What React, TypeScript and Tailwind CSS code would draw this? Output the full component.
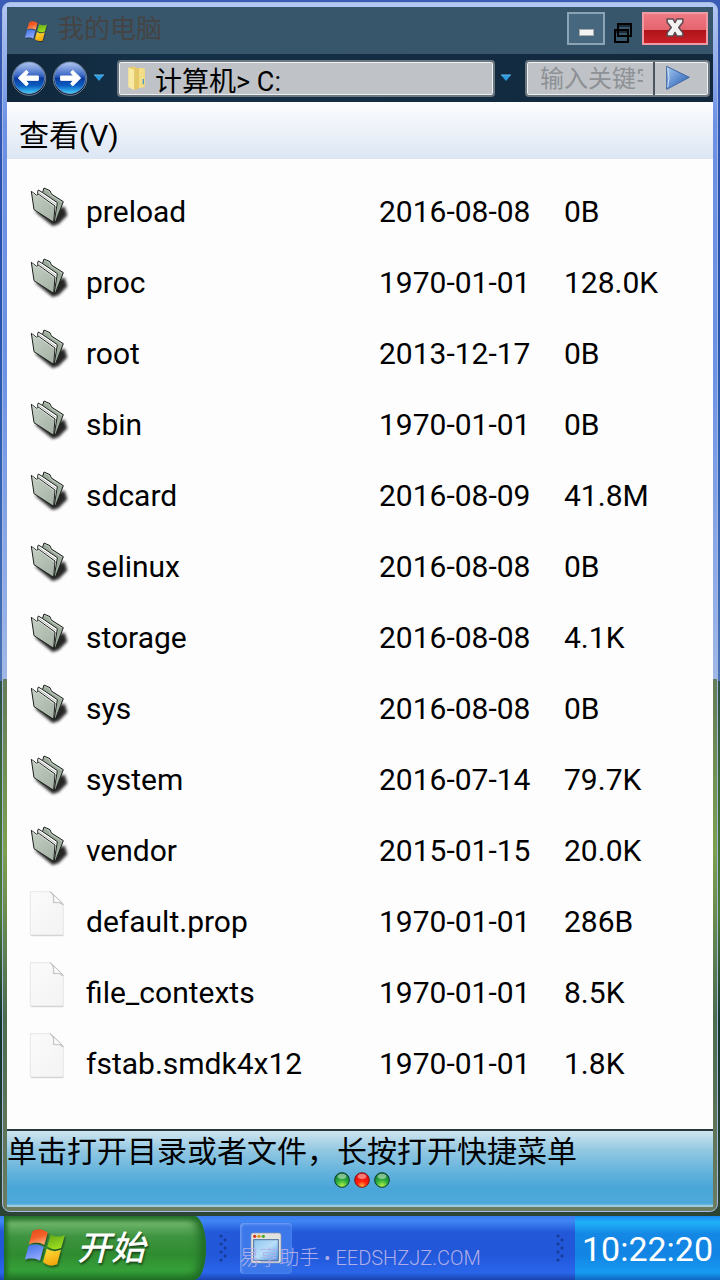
import React, { useState } from "react";

interface Entry {
  name: string;
  date: string;
  size: string;
  type: "folder" | "file";
}

const entries: Entry[] = [
  { name: "preload", date: "2016-08-08", size: "0B", type: "folder" },
  { name: "proc", date: "1970-01-01", size: "128.0K", type: "folder" },
  { name: "root", date: "2013-12-17", size: "0B", type: "folder" },
  { name: "sbin", date: "1970-01-01", size: "0B", type: "folder" },
  { name: "sdcard", date: "2016-08-09", size: "41.8M", type: "folder" },
  { name: "selinux", date: "2016-08-08", size: "0B", type: "folder" },
  { name: "storage", date: "2016-08-08", size: "4.1K", type: "folder" },
  { name: "sys", date: "2016-08-08", size: "0B", type: "folder" },
  { name: "system", date: "2016-07-14", size: "79.7K", type: "folder" },
  { name: "vendor", date: "2015-01-15", size: "20.0K", type: "folder" },
  { name: "default.prop", date: "1970-01-01", size: "286B", type: "file" },
  { name: "file_contexts", date: "1970-01-01", size: "8.5K", type: "file" },
  { name: "fstab.smdk4x12", date: "1970-01-01", size: "1.8K", type: "file" },
];

const WindowsLogo = ({ className }: { className: string }) => (
  <svg viewBox="70 350 130 125" className={className} aria-hidden="true">
    <defs>
      <linearGradient id="flagRed" x1="0" y1="0" x2="0.4" y2="1">
        <stop offset="0" stopColor="#e8471c" />
        <stop offset="0.6" stopColor="#f4622a" />
        <stop offset="1" stopColor="#ffa070" />
      </linearGradient>
      <linearGradient id="flagGreen" x1="0" y1="0" x2="0.4" y2="1">
        <stop offset="0" stopColor="#5fa51e" />
        <stop offset="1" stopColor="#9bdc1e" />
      </linearGradient>
      <linearGradient id="flagBlue" x1="0" y1="0" x2="0.4" y2="1">
        <stop offset="0" stopColor="#3d6fe0" />
        <stop offset="1" stopColor="#8fa8ff" />
      </linearGradient>
      <linearGradient id="flagYellow" x1="0" y1="0" x2="0.4" y2="1">
        <stop offset="0" stopColor="#ffe040" />
        <stop offset="1" stopColor="#f3a80c" />
      </linearGradient>
      <filter id="flagShadow" x="-20%" y="-20%" width="140%" height="140%">
        <feDropShadow dx="3" dy="5" stdDeviation="3" floodOpacity="0.5" />
      </filter>
    </defs>
    <g filter="url(#flagShadow)">
      <path d="M98 362Q120 350 143 366L133 403Q112 391 87 401Z" fill="url(#flagRed)" />
      <path d="M152 372Q172 384 194 374L183 412Q162 422 142 408Z" fill="url(#flagGreen)" />
      <path d="M86 406Q108 397 131 409L120 450Q98 438 75 447Z" fill="url(#flagBlue)" />
      <path d="M140 415Q160 427 182 418L171 461Q150 470 129 455Z" fill="url(#flagYellow)" />
    </g>
  </svg>
);

const FolderIcon = () => (
  <svg viewBox="84 27 126 150" className="mt-[3px] h-[50px] w-[42px] shrink-0" aria-hidden="true">
    <defs>
      <linearGradient id="folderFront" x1="0" y1="0" x2="1" y2="1">
        <stop offset="0" stopColor="#c6d0c5" />
        <stop offset="1" stopColor="#a3b0a3" />
      </linearGradient>
      <filter id="folderBlur" x="-30%" y="-30%" width="160%" height="160%">
        <feGaussianBlur stdDeviation="4" />
      </filter>
    </defs>
    <path d="M104 124L158 168L176 162L202 136L194 110L160 118Z" fill="#000" opacity="0.85" filter="url(#folderBlur)" />
    <path d="M126 72L132 54L150 62L154 72L190 95L166 157L118 120Z" fill="#9cab9c" stroke="#1c201c" strokeWidth="3" strokeLinejoin="round" />
    <path d="M133 58L148 65L152 75L186 97" fill="none" stroke="#d4dcd3" strokeWidth="2" />
    <path d="M113 66L115 60L128 68L172 98L163 154L118 118Z" fill="#fff" stroke="#1c201c" strokeWidth="3" strokeLinejoin="round" />
    <path d="M117 68L171 106" fill="none" stroke="#8c948c" strokeWidth="2" />
    <path d="M94 64L110 76L116 73L165 108L161 157L102 119Z" fill="url(#folderFront)" stroke="#1c201c" strokeWidth="3" strokeLinejoin="round" />
    <path d="M97 68L110 79L116 76L162 110" fill="none" stroke="#e6ece5" strokeWidth="2" />
  </svg>
);

const FileIcon = () => (
  <svg viewBox="84 27 126 150" className="mt-[3px] h-[50px] w-[42px] shrink-0" aria-hidden="true">
    <defs>
      <linearGradient id="page" x1="0" y1="0" x2="1" y2="1">
        <stop offset="0" stopColor="#fbfbfb" />
        <stop offset="1" stopColor="#f3f3f3" />
      </linearGradient>
    </defs>
    <path d="M93 167H190" stroke="#c9c9c9" strokeWidth="3" />
    <path d="M91 35H150Q154 36 161 44L184 66Q190 71 190 75V165H91Z" fill="url(#page)" stroke="#dcdcdc" strokeWidth="2" />
    <path d="M150 35Q163 42 160 68Q178 64 190 75L184 66L161 44Z" fill="#d4d4d4" stroke="#b4b4b4" strokeWidth="2" />
    <path d="M163 48L181 66L163 65Z" fill="#fcfcfc" />
  </svg>
);

const NavOrb = ({ direction }: { direction: "back" | "forward" }) => (
  <svg viewBox="0 0 108 108" className="h-9 w-9" aria-hidden="true">
    <defs>
      <linearGradient id="orb" x1="0" y1="0" x2="0" y2="1">
        <stop offset="0" stopColor="#b3c7f0" />
        <stop offset="0.4" stopColor="#3f6cc8" />
        <stop offset="0.52" stopColor="#0a3a9c" />
        <stop offset="0.75" stopColor="#0c5fc4" />
        <stop offset="1" stopColor="#42d4fa" />
      </linearGradient>
    </defs>
    <circle cx="54" cy="56" r="50" fill="#0a1a30" stroke="#6f8294" strokeWidth="3" />
    <circle cx="54" cy="54" r="47" fill="url(#orb)" stroke="#7f9fd0" strokeWidth="2" />
    <path
      d={
        direction === "back"
          ? "M22 54L46 31L52 37L44 48H82V61H44L52 71L46 78Z"
          : "M86 54L62 31L56 37L64 48H26V61H64L56 71L62 78Z"
      }
      fill="#fff"
      stroke="#fff"
      strokeWidth="3"
      strokeLinejoin="round"
    />
  </svg>
);

const Caret = () => (
  <svg viewBox="0 0 12 8" className="h-2 w-3" aria-hidden="true">
    <path d="M1 1H11L6 7Z" fill="#2d9be0" />
    <path d="M1 1H11" stroke="#64b8ea" />
  </svg>
);

const AddressFolder = () => (
  <svg viewBox="0 0 60 78" className="h-[26px] w-5 shrink-0" aria-hidden="true">
    <path d="M4 8L22 4L28 10H50L54 14V66L20 70L4 64Z" fill="#e9cf6c" />
    <path d="M4 8L22 14V76L4 66Z" fill="#f8e9a4" />
    <path d="M22 12L36 8V70L22 76Z" fill="#e4c766" />
    <path d="M36 10H53V66L36 69Z" fill="#f3dd86" />
    <path d="M49 42V58" stroke="#4f9ac0" strokeWidth="4" />
  </svg>
);

const RestoreIcon = () => (
  <svg viewBox="0 0 20 22" className="h-[22px] w-5" fill="none" stroke="#000" aria-hidden="true">
    <path d="M5 2H18V14H5Z" strokeWidth="2" />
    <path d="M4 4H19" strokeWidth="1" />
    <path d="M2 8H15V20H2Z" strokeWidth="2" />
    <path d="M1 10H16" strokeWidth="1" />
  </svg>
);

const CloseIcon = () => (
  <svg viewBox="0 0 48 54" className="h-[19px] w-[18px]" preserveAspectRatio="none" aria-hidden="true">
    <path
      d="M3 3H19L24 13L29 3H45V12L34 27L45 42V51H29L24 41L19 51H3V42L14 27L3 12Z"
      fill="#f2f2f2"
      stroke="#5c4a50"
      strokeWidth="4"
      strokeLinejoin="round"
    />
  </svg>
);

const GoIcon = () => (
  <svg viewBox="0 0 78 78" className="h-[26px] w-[26px]" aria-hidden="true">
    <defs>
      <linearGradient id="go" x1="0" y1="0" x2="1" y2="1">
        <stop offset="0" stopColor="#a9c9ee" />
        <stop offset="0.5" stopColor="#5f8fd0" />
        <stop offset="1" stopColor="#2c5ba6" />
      </linearGradient>
    </defs>
    <path d="M5 4L73 37L5 73Z" fill="url(#go)" stroke="#3f67a4" strokeWidth="3" strokeLinejoin="round" />
    <path d="M8 9L12 38L8 66" fill="none" stroke="#cfe2f7" strokeWidth="3" />
  </svg>
);

const StatusDot = ({ active }: { active?: boolean }) => (
  <svg viewBox="0 0 48 48" className="h-4 w-4" aria-hidden="true">
    <defs>
      <radialGradient id="dotGreen" cx="0.5" cy="0.9" r="0.8">
        <stop offset="0" stopColor="#b8f04a" />
        <stop offset="0.5" stopColor="#2fae3c" />
        <stop offset="1" stopColor="#108038" />
      </radialGradient>
      <radialGradient id="dotRed" cx="0.5" cy="0.9" r="0.8">
        <stop offset="0" stopColor="#ffb03c" />
        <stop offset="0.4" stopColor="#ff2410" />
        <stop offset="1" stopColor="#e00808" />
      </radialGradient>
    </defs>
    <circle cx="24" cy="24" r="22" fill={active ? "url(#dotRed)" : "url(#dotGreen)"} stroke={active ? "#7c1a1a" : "#103c28"} strokeWidth="3" />
    <ellipse cx="24" cy="13" rx="13" ry="8" fill="#fff" opacity="0.45" />
  </svg>
);

const Grip = () => (
  <svg viewBox="0 0 10 30" className="h-[30px] w-2.5 shrink-0" fill="#173a94" aria-hidden="true">
    <circle cx="3" cy="3" r="1.5" />
    <circle cx="7" cy="7" r="1.5" />
    <circle cx="3" cy="11" r="1.5" />
    <circle cx="7" cy="15" r="1.5" />
    <circle cx="3" cy="19" r="1.5" />
    <circle cx="7" cy="23" r="1.5" />
    <circle cx="3" cy="27" r="1.5" />
  </svg>
);

const TaskWindowIcon = () => (
  <svg viewBox="0 0 96 96" className="h-8 w-8" aria-hidden="true">
    <defs>
      <linearGradient id="taskPane" x1="0" y1="0" x2="1" y2="1">
        <stop offset="0" stopColor="#8fc4ee" />
        <stop offset="0.5" stopColor="#b9def8" />
        <stop offset="1" stopColor="#4f9be4" />
      </linearGradient>
    </defs>
    <rect x="3" y="3" width="90" height="90" rx="6" fill="#e2e2de" stroke="#8c96a8" strokeWidth="2" />
    <rect x="11" y="23" width="74" height="62" fill="url(#taskPane)" stroke="#4d6f9c" strokeWidth="3" />
    <circle cx="14" cy="13" r="5" fill="#d8361c" />
    <circle cx="27" cy="13" r="5" fill="#d89a1c" />
    <circle cx="40" cy="13" r="5" fill="#4aa82c" />
  </svg>
);

const TitleBar = () => (
  <header className="flex h-[47px] items-start bg-[#38566b] pr-[5px] pl-[17px]">
    <WindowsLogo className="mt-[13px] h-[23px] w-6" />
    <h1 className="ml-2.5 flex-1 text-[26px] leading-[44px] text-[#444444]">我的电脑</h1>
    <div className="flex items-start pt-[5px]">
      <button
        aria-label="最小化"
        className="flex h-[33px] w-[38px] items-end justify-center border-2 border-[#8ba4b5] bg-[#47677f] pb-[7px]"
      >
        <span className="h-[7px] w-[15px] border border-[#a8acb0] bg-[#f2f2f2]" />
      </button>
      <button aria-label="还原" className="mt-2.5 ml-2 h-[22px] w-5">
        <RestoreIcon />
      </button>
      <button
        aria-label="关闭"
        className="ml-[9px] flex h-[33px] w-[66px] items-start justify-center border-2 border-[#ee9aa2] bg-[linear-gradient(#ee7a84_0%,#e4646e_54%,#b01218_56%,#c8202a_100%)] pt-1"
      >
        <CloseIcon />
      </button>
    </div>
  </header>
);

const Toolbar = () => {
  const [keyword, setKeyword] = useState("");

  return (
    <nav className="flex h-12 items-center bg-[linear-gradient(90deg,#10263a,#143048_20%,#12283c)] pr-[3px] pl-1">
      <button aria-label="后退">
        <NavOrb direction="back" />
      </button>
      <button aria-label="前进" className="ml-[5px]">
        <NavOrb direction="forward" />
      </button>
      <button aria-label="历史记录" className="ml-[5px] flex h-9 items-center">
        <Caret />
      </button>
      <div className="ml-3 flex h-[37px] min-w-0 flex-1 items-center rounded-sm border-2 border-[#6d7780] bg-[#bfc3c7] pl-2 shadow-[inset_0_0_0_1px_#eef1f3]">
        <AddressFolder />
        <input
          aria-label="地址"
          readOnly
          value="计算机> C:"
          className="ml-2 h-full min-w-0 flex-1 bg-transparent pt-0.5 text-[27px] text-black outline-none"
        />
      </div>
      <button aria-label="最近地址" className="mx-[5px] flex h-9 items-center">
        <Caret />
      </button>
      <form
        className="ml-2 flex h-[37px] rounded-sm border-2 border-[#6d7780] bg-[#bfc3c7] shadow-[inset_0_0_0_1px_#eef1f3]"
        onSubmit={(e) => e.preventDefault()}
      >
        <input
          aria-label="搜索"
          placeholder="输入关键字"
          value={keyword}
          onChange={(e) => setKeyword(e.target.value)}
          className="w-[126px] bg-transparent pt-0.5 pr-2.5 pl-[13px] text-2xl text-black outline-none placeholder:text-[#8e9195]"
        />
        <button aria-label="开始搜索" className="flex w-[55px] items-center border-l-2 border-[#4c555d] pl-2.5">
          <GoIcon />
        </button>
      </form>
    </nav>
  );
};

const FileList = () => (
  <main className="flex-1 bg-[#fdfdfd] pt-[17px] pb-[30px]">
    <table className="w-full table-fixed text-3xl text-black">
      <colgroup>
        <col />
        <col className="w-[185px]" />
        <col className="w-[149px]" />
      </colgroup>
      <tbody>
        {entries.map((entry) => (
          <tr key={entry.name} className="h-[71px]">
            <td className="p-0">
              <button className="flex h-[71px] w-full items-center pl-[21px] text-left">
                <span className="self-start">
                  {entry.type === "folder" ? <FolderIcon /> : <FileIcon />}
                </span>
                <span className="ml-4 truncate">{entry.name}</span>
              </button>
            </td>
            <td className="p-0">{entry.date}</td>
            <td className="p-0">{entry.size}</td>
          </tr>
        ))}
      </tbody>
    </table>
  </main>
);

const StatusBar = () => (
  <footer className="flex h-[78px] flex-col border-t-2 border-[#26343c] bg-[linear-gradient(#cfe5f0_0%,#93c8e2_25%,#62b2dc_55%,#4aa6d8_75%,#4fa9da_96%,#9ccbe0_98%)]">
    <p className="text-3xl leading-[41px] whitespace-nowrap text-black">单击打开目录或者文件，长按打开快捷菜单</p>
    <div className="flex justify-center gap-1 pl-1">
      <StatusDot />
      <StatusDot active />
      <StatusDot />
    </div>
  </footer>
);

const Taskbar = () => (
  <div className="relative flex h-16 items-center bg-[linear-gradient(#3a7cf0_0%,#3f86f4_8%,#2358d8_25%,#2257da_60%,#2a66ea_88%,#1a44b0_100%)] pl-1">
    <button className="flex h-full w-[202px] items-center rounded-[0_12px_12px_0/0_32px_32px_0] bg-[linear-gradient(#2f7a34_0%,#6cb268_12%,#3e9440_32%,#2f8c30_60%,#36a038_85%,#237a28_100%)] pl-[19px] shadow-[inset_-6px_0_8px_#1f6c24,inset_3px_0_4px_#1f6c24]">
      <WindowsLogo className="h-[42px] w-11" />
      <span className="ml-2.5 text-[34px] font-medium text-white italic [text-shadow:1px_2px_2px_#1c4a1c]">
        开始
      </span>
    </button>
    <div className="ml-3">
      <Grip />
    </div>
    <button
      aria-label="我的电脑"
      className="ml-3 flex h-[51px] w-[52px] items-center justify-center rounded-sm bg-[#3c78ea] shadow-[inset_1px_1px_3px_#7fa8f6]"
    >
      <TaskWindowIcon />
    </button>
    <div className="ml-auto pr-2.5">
      <Grip />
    </div>
    <time className="flex h-full w-[145px] items-center justify-center bg-[linear-gradient(#1a8cf0_0%,#20b0f8_10%,#1488e4_28%,#1284e4_60%,#169af0_88%,#0e68c4_100%)] pt-0.5 text-[34px] text-white">
      10:22:20
    </time>
    <p className="pointer-events-none absolute inset-x-0 bottom-2 text-center text-xl leading-7 font-light text-[#b0aee8]">
      易享助手 • EEDSHZJZ.COM
    </p>
  </div>
);

export default function App() {
  return (
    <div className="flex min-h-screen flex-col bg-[#1f4a9c] font-['Roboto','Noto_Sans_CJK_SC',sans-serif]">
      <div className="flex flex-1 flex-col bg-[linear-gradient(#3a5cb4_0%,#2850b0_20%,#2c5cb0_35%,#4a74b4_56%,#2c5044_56%,#3c6c34_65%,#4c7c34_75%,#12382c_84%,#2c4434_100%)] px-0.5 pt-0.5 pb-1">
        <div className="flex flex-1 flex-col rounded-lg border border-[#a4b8e0] bg-[linear-gradient(#b4c8f4_0%,#6c90e4_10%,#6c92e6_30%,#a0b8e8_56%,#647c58_56%,#7ca050_70%,#4c6c50_84%,#6c7c60_100%)] p-1">
          <TitleBar />
          <Toolbar />
          <div className="flex h-[57px] items-center bg-linear-to-b from-[#fdfdfe] to-[#dce6f3] pt-2.5 pl-3">
            <button className="text-3xl text-black">查看(V)</button>
          </div>
          <FileList />
          <StatusBar />
        </div>
      </div>
      <Taskbar />
    </div>
  );
}
